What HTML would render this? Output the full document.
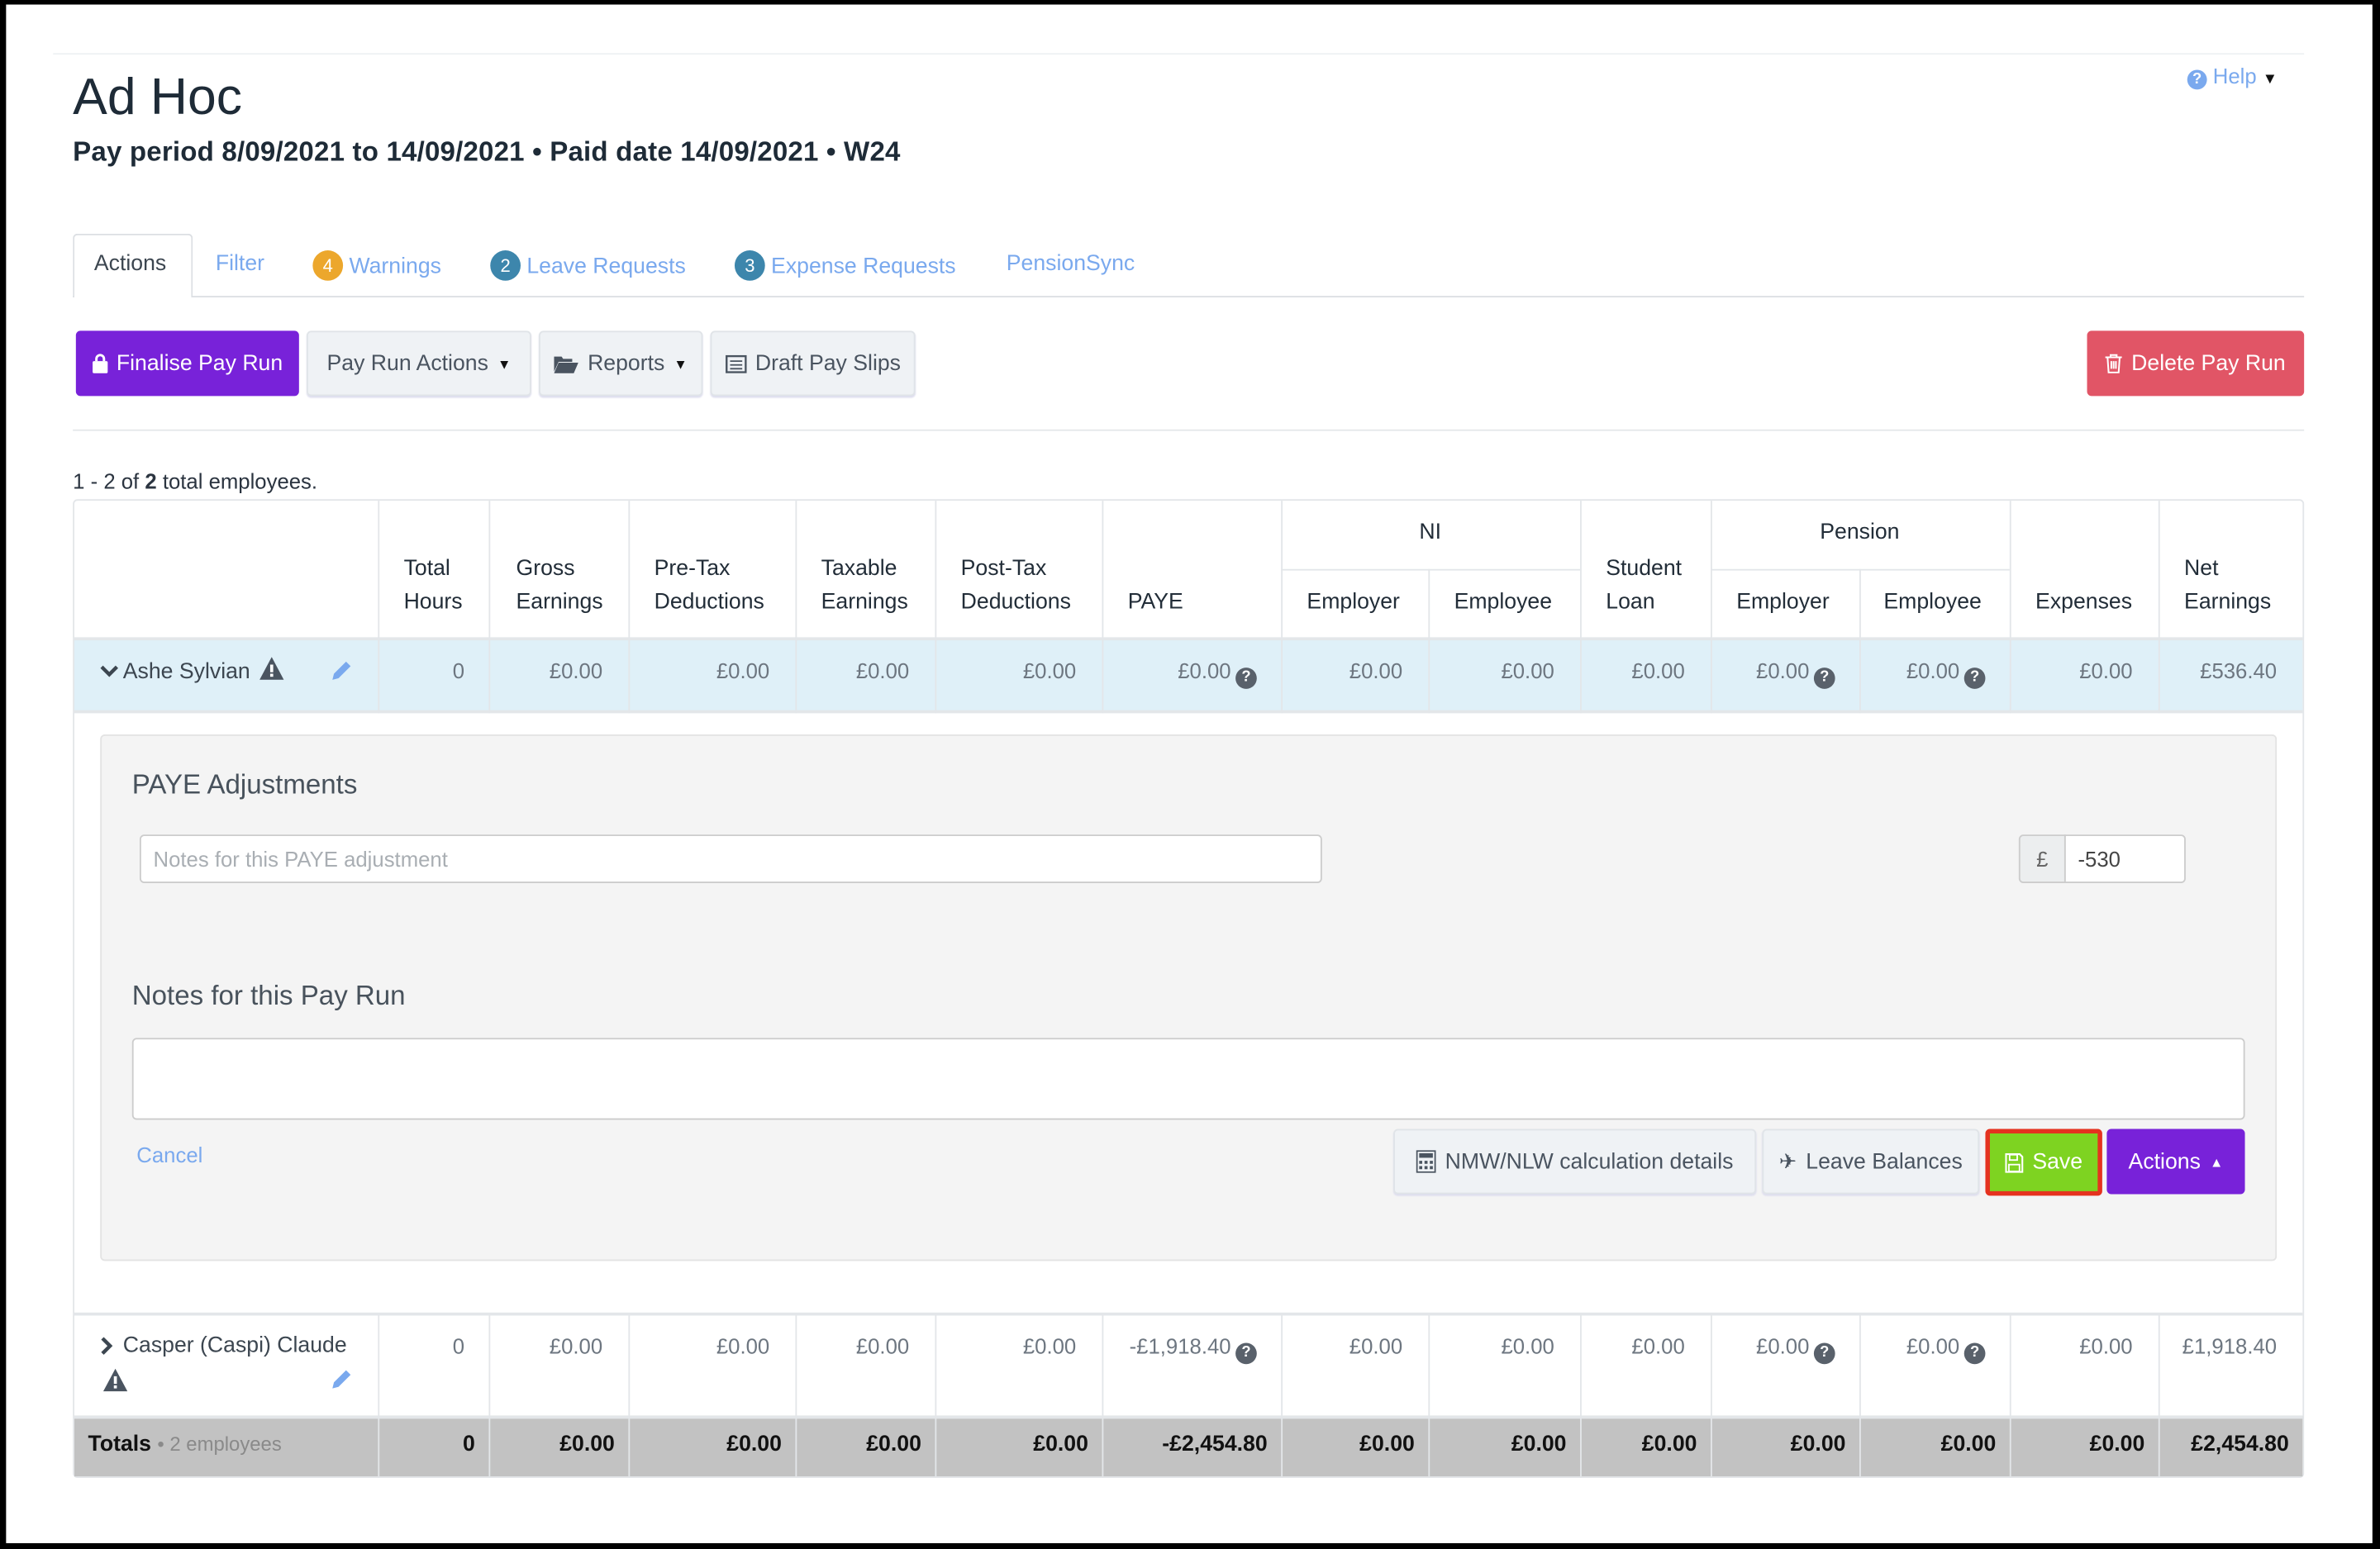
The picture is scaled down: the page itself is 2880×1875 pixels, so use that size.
<!DOCTYPE html>
<html><head><meta charset="utf-8"><style>
*{box-sizing:border-box;margin:0;padding:0}
html,body{width:2880px;height:1875px;overflow:hidden;background:#fff}
#w{position:absolute;left:0;top:0;width:1568px;height:1021px;transform:scale(1.836735);transform-origin:0 0;background:#fff;font-family:"Liberation Sans",sans-serif;color:#2b3440}
.a{position:absolute;white-space:nowrap}
.k{position:absolute;background:#000}
.btn{position:absolute;border-radius:3px;font-size:14.5px;display:flex;align-items:center;justify-content:center;gap:6px}
.gb{background:#eff2f5;border:1px solid #e0e4e8;color:#4a5460;box-shadow:0 1px 1px #dde}
.hd{font-size:14.5px;color:#222d38;line-height:22px}
.v{font-size:14px;color:#6d7680;text-align:right}
.t{font-size:14.5px;color:#111;font-weight:bold;text-align:right}
.vl{position:absolute;width:1px;background:#e3e6e9}
.q{display:inline-block;width:14px;height:14px;border-radius:7px;background:#59616b;color:#fff;font-size:10px;font-weight:bold;text-align:center;line-height:14px;vertical-align:-2px;margin-left:3px}
.bd{display:inline-block;width:20px;height:20px;border-radius:10px;color:#fff;font-size:12px;text-align:center;line-height:20px;margin-right:4px;vertical-align:1px}
</style></head><body><div id="w">
<div class="k" style="left:0;top:0;width:1568px;height:3px"></div>
<div class="k" style="left:0;top:0;width:4px;height:1021px"></div>
<div class="k" style="left:1563px;top:0;width:5px;height:1021px"></div>
<div class="k" style="left:0;top:1017px;width:1568px;height:4px"></div>
<div class="a" style="left:35px;top:35px;width:1483px;height:1px;background:#eef1f4"></div>
<div class="a" style="left:48px;top:45px;font-size:34px;color:#1e2b37">Ad Hoc</div>
<div class="a" style="left:48px;top:90px;font-size:18px;letter-spacing:0.1px;color:#1e2b37;font-weight:bold">Pay period 8/09/2021 to 14/09/2021 • Paid date 14/09/2021 • W24</div>
<div class="a" style="left:1438px;top:42px;font-size:14px;color:#7aa9ee"><span class="q" style="background:#7aa9ee;width:13px;height:13px;line-height:13px;vertical-align:0">?</span> Help <span style="color:#111;font-size:10px">▼</span></div>
<div class="a" style="left:48px;top:195px;width:1470px;height:1px;background:#dcdfe3"></div>
<div class="a" style="left:48px;top:154px;width:79px;height:42px;background:#fff;border:1px solid #dcdfe3;border-bottom:none;border-radius:3px 3px 0 0"></div>
<div class="a" style="left:62px;top:166px;font-size:14.5px;color:#3c4650">Actions</div>
<div class="a" style="left:142px;top:166px;font-size:14.5px;color:#7aa9ee">Filter</div>
<div class="a" style="left:206px;top:165px;font-size:14.5px;color:#7aa9ee"><span class="bd" style="background:#eca72c">4</span>Warnings</div>
<div class="a" style="left:323px;top:165px;font-size:14.5px;color:#7aa9ee"><span class="bd" style="background:#3d86ac">2</span>Leave Requests</div>
<div class="a" style="left:484px;top:165px;font-size:14.5px;color:#7aa9ee"><span class="bd" style="background:#3d86ac">3</span>Expense Requests</div>
<div class="a" style="left:663px;top:166px;font-size:14.5px;color:#7aa9ee">PensionSync</div>
<div class="btn" style="left:50px;top:218px;width:147px;height:43px;background:#7822d9;color:#fff"><svg width="10" height="13" viewBox="0 0 10 13"><rect x="0" y="5" width="10" height="8" rx="1" fill="#fff"/><path d="M2.5 5V3.5a2.5 2.5 0 0 1 5 0V5" stroke="#fff" stroke-width="1.6" fill="none"/></svg>Finalise Pay Run</div>
<div class="btn gb" style="left:202px;top:218px;width:148px;height:43px">Pay Run Actions <span style="font-size:9px;color:#111">▼</span></div>
<div class="btn gb" style="left:355px;top:218px;width:108px;height:43px"><svg width="16" height="12" viewBox="0 0 16 12"><path d="M0 1h5l1 1.5h6v2H3L0 11z M3 5h13l-3 7H0z" fill="#4a5460"/></svg>Reports <span style="font-size:9px;color:#111">▼</span></div>
<div class="btn gb" style="left:468px;top:218px;width:135px;height:43px"><svg width="14" height="12" viewBox="0 0 14 12"><rect x=".7" y=".7" width="12.6" height="10.6" fill="none" stroke="#4a5460" stroke-width="1.3"/><path d="M3 4h8M3 6.5h8M3 9h8" stroke="#4a5460"/></svg>Draft Pay Slips</div>
<div class="btn" style="left:1375px;top:218px;width:143px;height:43px;background:#e15566;color:#fff"><svg width="11" height="13" viewBox="0 0 11 13"><path d="M0 2.5h11M3.5 2.5V1h4v1.5M1.5 2.5l.7 10h6.6l.7-10M4 5v5M5.5 5v5M7 5v5" stroke="#fff" stroke-width="1.1" fill="none"/></svg>Delete Pay Run</div>
<div class="a" style="left:48px;top:283px;width:1470px;height:1px;background:#e5e7ea"></div>
<div class="a" style="left:48px;top:309px;font-size:14px;color:#2b3440">1 - 2 of <b>2</b> total employees.</div>
<div class="a" style="left:48px;top:329px;width:1470px;height:645px;border:1px solid #e3e6e9;border-radius:3px"></div>
<div class="a" style="left:49px;top:420px;width:1468px;height:50px;background:#dff0f8;border-top:2px solid #e3e6e9;border-bottom:2px solid #e3e6e9"></div>
<div class="a" style="left:49px;top:865px;width:1468px;height:2px;background:#e3e6e9"></div>
<div class="a" style="left:49px;top:933px;width:1468px;height:40px;background:#c2c2c2;border-top:2px solid #e3e6e9"></div>
<div class="a" style="left:844px;top:375px;width:197px;height:1px;background:#e3e6e9"></div>
<div class="a" style="left:1127px;top:375px;width:197px;height:1px;background:#e3e6e9"></div>
<div class="vl" style="left:249px;top:330px;height:140px"></div>
<div class="vl" style="left:322px;top:330px;height:140px"></div>
<div class="vl" style="left:414px;top:330px;height:140px"></div>
<div class="vl" style="left:524px;top:330px;height:140px"></div>
<div class="vl" style="left:616px;top:330px;height:140px"></div>
<div class="vl" style="left:726px;top:330px;height:140px"></div>
<div class="vl" style="left:844px;top:330px;height:140px"></div>
<div class="vl" style="left:941px;top:375px;height:95px"></div>
<div class="vl" style="left:1041px;top:330px;height:140px"></div>
<div class="vl" style="left:1127px;top:330px;height:140px"></div>
<div class="vl" style="left:1225px;top:375px;height:95px"></div>
<div class="vl" style="left:1324px;top:330px;height:140px"></div>
<div class="vl" style="left:1422px;top:330px;height:140px"></div>
<div class="vl" style="left:249px;top:866px;height:107px"></div>
<div class="vl" style="left:322px;top:866px;height:107px"></div>
<div class="vl" style="left:414px;top:866px;height:107px"></div>
<div class="vl" style="left:524px;top:866px;height:107px"></div>
<div class="vl" style="left:616px;top:866px;height:107px"></div>
<div class="vl" style="left:726px;top:866px;height:107px"></div>
<div class="vl" style="left:844px;top:866px;height:107px"></div>
<div class="vl" style="left:941px;top:866px;height:107px"></div>
<div class="vl" style="left:1041px;top:866px;height:107px"></div>
<div class="vl" style="left:1127px;top:866px;height:107px"></div>
<div class="vl" style="left:1225px;top:866px;height:107px"></div>
<div class="vl" style="left:1324px;top:866px;height:107px"></div>
<div class="vl" style="left:1422px;top:866px;height:107px"></div>
<div class="a hd" style="left:266px;top:364px">Total<br>Hours</div>
<div class="a hd" style="left:340px;top:364px">Gross<br>Earnings</div>
<div class="a hd" style="left:431px;top:364px">Pre-Tax<br>Deductions</div>
<div class="a hd" style="left:541px;top:364px">Taxable<br>Earnings</div>
<div class="a hd" style="left:633px;top:364px">Post-Tax<br>Deductions</div>
<div class="a hd" style="left:743px;top:386px">PAYE</div>
<div class="a hd" style="left:935px;top:340px">NI</div>
<div class="a hd" style="left:861px;top:386px">Employer</div>
<div class="a hd" style="left:958px;top:386px">Employee</div>
<div class="a hd" style="left:1058px;top:364px">Student<br>Loan</div>
<div class="a hd" style="left:1199px;top:340px">Pension</div>
<div class="a hd" style="left:1144px;top:386px">Employer</div>
<div class="a hd" style="left:1241px;top:386px">Employee</div>
<div class="a hd" style="left:1341px;top:386px">Expenses</div>
<div class="a hd" style="left:1439px;top:364px">Net<br>Earnings</div>
<svg class="a" style="left:66px;top:438px" width="12" height="9" viewBox="0 0 12 9"><path d="M1 1.5l5 5 5-5" stroke="#3c4650" stroke-width="2.4" fill="none"/></svg>
<div class="a" style="left:81px;top:433px;font-size:14.5px;color:#3c4650">Ashe Sylvian <svg width="16" height="15" viewBox="0 0 16 15" style="vertical-align:-1px;margin-left:2px"><path d="M8 0L16 15H0z" fill="#4a5460"/><rect x="7" y="5" width="2" height="5" fill="#fff"/><rect x="7" y="11" width="2" height="2" fill="#fff"/></svg></div>
<svg class="a" style="left:218px;top:435px" width="14" height="14" viewBox="0 0 14 14"><path d="M10 1l3 3-8 8-4 1 1-4z" fill="#7aa9ee"/></svg>
<div class="a v" style="left:249px;width:57px;top:434px">0</div>
<div class="a v" style="left:322px;width:75px;top:434px">£0.00</div>
<div class="a v" style="left:414px;width:93px;top:434px">£0.00</div>
<div class="a v" style="left:524px;width:75px;top:434px">£0.00</div>
<div class="a v" style="left:616px;width:93px;top:434px">£0.00</div>
<div class="a v" style="left:726px;width:102px;top:434px">£0.00<span class="q">?</span></div>
<div class="a v" style="left:844px;width:80px;top:434px">£0.00</div>
<div class="a v" style="left:941px;width:83px;top:434px">£0.00</div>
<div class="a v" style="left:1041px;width:69px;top:434px">£0.00</div>
<div class="a v" style="left:1127px;width:82px;top:434px">£0.00<span class="q">?</span></div>
<div class="a v" style="left:1225px;width:83px;top:434px">£0.00<span class="q">?</span></div>
<div class="a v" style="left:1324px;width:81px;top:434px">£0.00</div>
<div class="a v" style="left:1422px;width:78px;top:434px">£536.40</div>
<div class="a" style="left:66px;top:484px;width:1434px;height:347px;background:#f4f4f4;border:1px solid #e3e3e3;border-radius:3px"></div>
<div class="a" style="left:87px;top:507px;font-size:18px;color:#48525c">PAYE Adjustments</div>
<div class="a" style="left:92px;top:550px;width:779px;height:32px;background:#fff;border:1px solid #ccc;border-radius:3px;font-size:14px;color:#a9aeb3;padding:7px 8px">Notes for this PAYE adjustment</div>
<div class="a" style="left:1330px;top:550px;width:31px;height:32px;background:#eceeef;border:1px solid #ccc;border-radius:3px 0 0 3px;font-size:14px;color:#666;text-align:center;line-height:30px">£</div>
<div class="a" style="left:1360px;top:550px;width:80px;height:32px;background:#fff;border:1px solid #ccc;border-radius:0 3px 3px 0;font-size:14px;color:#444;padding:7px 8px">-530</div>
<div class="a" style="left:87px;top:646px;font-size:18px;color:#48525c">Notes for this Pay Run</div>
<div class="a" style="left:87px;top:684px;width:1392px;height:54px;background:#fff;border:1px solid #ccc;border-radius:3px"></div>
<div class="a" style="left:90px;top:753px;font-size:14px;color:#7aa9ee">Cancel</div>
<div class="btn gb" style="left:918px;top:744px;width:239px;height:43px"><svg width="13" height="15" viewBox="0 0 13 15"><rect x=".5" y=".5" width="12" height="14" fill="none" stroke="#4a5460"/><rect x="2" y="2" width="9" height="3" fill="#4a5460"/><path d="M2 7h2v2H2zM5.5 7h2v2h-2zM9 7h2v2H9zM2 10.5h2v2H2zM5.5 10.5h2v2h-2zM9 10.5h2v2H9z" fill="#4a5460"/></svg>NMW/NLW calculation details</div>
<div class="btn gb" style="left:1161px;top:744px;width:143px;height:43px"><span style="font-size:14px">✈</span>Leave Balances</div>
<div class="btn" style="left:1308px;top:744px;width:77px;height:44px;background:#7ed321;border:3px solid #e5321f;color:#fff"><svg width="12" height="13" viewBox="0 0 12 13"><path d="M.6.6h9l1.8 1.8v10H.6z" fill="none" stroke="#fff" stroke-width="1.2"/><rect x="3" y="1" width="5" height="3.5" fill="none" stroke="#fff"/><rect x="2.5" y="7.5" width="7" height="4.5" fill="none" stroke="#fff"/></svg>Save</div>
<div class="btn" style="left:1388px;top:744px;width:91px;height:43px;background:#7822d9;color:#fff">Actions <span style="font-size:9px">▲</span></div>
<svg class="a" style="left:66px;top:881px" width="9" height="12" viewBox="0 0 9 12"><path d="M1.5 1l5 5-5 5" stroke="#3c4650" stroke-width="2.4" fill="none"/></svg>
<div class="a" style="left:81px;top:879px;font-size:14.5px;color:#3c4650">Casper (Caspi) Claude</div>
<svg class="a" style="left:68px;top:902px" width="16" height="15" viewBox="0 0 16 15"><path d="M8 0L16 15H0z" fill="#4a5460"/><rect x="7" y="5" width="2" height="5" fill="#fff"/><rect x="7" y="11" width="2" height="2" fill="#fff"/></svg>
<svg class="a" style="left:218px;top:902px" width="14" height="14" viewBox="0 0 14 14"><path d="M10 1l3 3-8 8-4 1 1-4z" fill="#7aa9ee"/></svg>
<div class="a v" style="left:249px;width:57px;top:879px">0</div>
<div class="a v" style="left:322px;width:75px;top:879px">£0.00</div>
<div class="a v" style="left:414px;width:93px;top:879px">£0.00</div>
<div class="a v" style="left:524px;width:75px;top:879px">£0.00</div>
<div class="a v" style="left:616px;width:93px;top:879px">£0.00</div>
<div class="a v" style="left:726px;width:102px;top:879px">-£1,918.40<span class="q">?</span></div>
<div class="a v" style="left:844px;width:80px;top:879px">£0.00</div>
<div class="a v" style="left:941px;width:83px;top:879px">£0.00</div>
<div class="a v" style="left:1041px;width:69px;top:879px">£0.00</div>
<div class="a v" style="left:1127px;width:82px;top:879px">£0.00<span class="q">?</span></div>
<div class="a v" style="left:1225px;width:83px;top:879px">£0.00<span class="q">?</span></div>
<div class="a v" style="left:1324px;width:81px;top:879px">£0.00</div>
<div class="a v" style="left:1422px;width:78px;top:879px">£1,918.40</div>
<div class="a" style="left:58px;top:944px;font-size:14.5px;color:#111;font-weight:bold">Totals <span style="font-weight:normal;color:#8a8a8a;font-size:13px">• 2 employees</span></div>
<div class="a t" style="left:249px;width:64px;top:944px">0</div>
<div class="a t" style="left:322px;width:83px;top:944px">£0.00</div>
<div class="a t" style="left:414px;width:101px;top:944px">£0.00</div>
<div class="a t" style="left:524px;width:83px;top:944px">£0.00</div>
<div class="a t" style="left:616px;width:101px;top:944px">£0.00</div>
<div class="a t" style="left:726px;width:109px;top:944px">-£2,454.80</div>
<div class="a t" style="left:844px;width:88px;top:944px">£0.00</div>
<div class="a t" style="left:941px;width:91px;top:944px">£0.00</div>
<div class="a t" style="left:1041px;width:77px;top:944px">£0.00</div>
<div class="a t" style="left:1127px;width:89px;top:944px">£0.00</div>
<div class="a t" style="left:1225px;width:90px;top:944px">£0.00</div>
<div class="a t" style="left:1324px;width:89px;top:944px">£0.00</div>
<div class="a t" style="left:1422px;width:86px;top:944px">£2,454.80</div>
</div>
</body></html>
